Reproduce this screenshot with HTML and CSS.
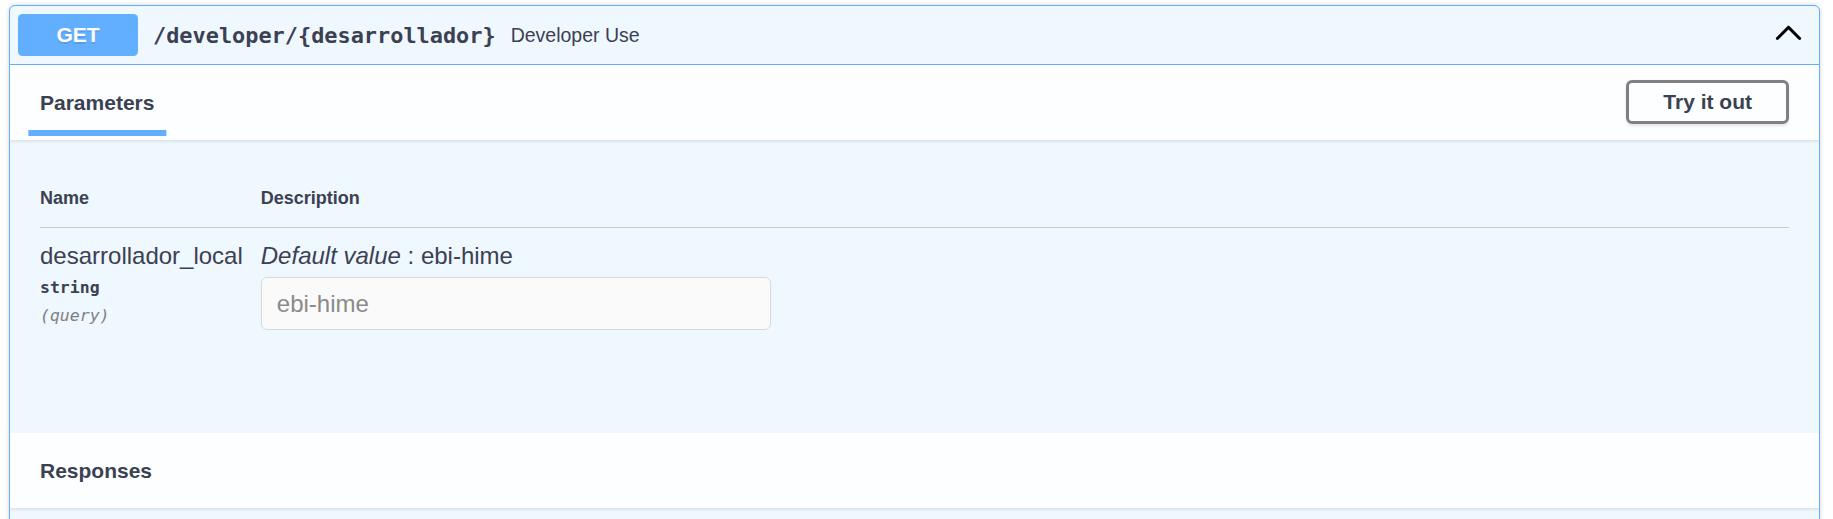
FILE: index.html
```html
<!DOCTYPE html>
<html lang="en">
<head>
<meta charset="utf-8">
<title>GET /developer/{desarrollador}</title>
<link rel="stylesheet" href="styles.css">
</head>
<body>
<div class="wrapper">
  <div class="opblock opblock-get">
    <div class="summary">
      <span class="method">GET</span>
      <span class="path">/developer/{desarrollador}</span>
      <span class="summary-desc">Developer Use</span>
      <svg class="arrow" viewBox="0 0 20 20" width="33" height="33" aria-hidden="true">
        <path d="M17.418 14.908c-.363.363-.95.363-1.313 0L10 8.802l-6.105 6.106c-.363.363-.95.363-1.313 0s-.363-.95 0-1.313l6.762-6.763c.362-.363.949-.363 1.312 0l6.762 6.763c.363.362.363.95 0 1.313z"/>
      </svg>
    </div>
    <div class="section-header">
      <div class="tab-header">
        <h4 class="tab-title"><span class="tab-label">Parameters</span></h4>
      </div>
      <button class="try-out">Try it out</button>
    </div>
    <div class="table-container">
      <table class="parameters">
        <thead>
          <tr>
            <th class="col-name">Name</th>
            <th class="col-desc">Description</th>
          </tr>
        </thead>
        <tbody>
          <tr>
            <td class="col-name">
              <div class="param-name">desarrollador_local</div>
              <div class="param-type">string</div>
              <div class="param-in">(query)</div>
            </td>
            <td class="col-desc">
              <div class="param-default"><i>Default value</i> : ebi-hime</div>
              <input class="param-input" type="text" placeholder="ebi-hime" disabled>
            </td>
          </tr>
        </tbody>
      </table>
    </div>
    <div class="section-header responses-header">
      <h4 class="tab-title">Responses</h4>
    </div>
    <div class="responses-body"></div>
  </div>
</div>
</body>
</html>
```

FILE: styles.css
```css
* {
  box-sizing: border-box;
}

html, body {
  margin: 0;
  padding: 0;
  background: #ffffff;
}

body {
  font-family: "Liberation Sans", Arial, sans-serif;
  color: #3b4151;
  overflow: hidden;
}

.wrapper {
  padding: 5px 13px 0 9px;
}

.opblock {
  border: 1px solid #61affe;
  border-radius: 6px;
  background: #eff7ff;
  box-shadow: 0 0 4.5px rgba(0, 0, 0, 0.19);
  overflow: hidden;
}

.summary {
  display: flex;
  align-items: center;
  padding: 8px 8px 8px 8px;
  border-bottom: 1px solid #61affe;
}

.method {
  display: block;
  width: 120px;
  height: 42px;
  line-height: 42px;
  background: #61affe;
  color: #ffffff;
  border-radius: 4.5px;
  font-size: 21px;
  font-weight: 700;
  text-align: center;
  text-shadow: 0 1.5px 0 rgba(0, 0, 0, 0.1);
}

.path {
  padding: 0 15px;
  font-family: "DejaVu Sans Mono", monospace;
  font-size: 21.9px;
  font-weight: 700;
  color: #3b4151;
}

.summary-desc {
  flex: 1 1 auto;
  font-size: 19.5px;
  color: #3b4151;
}

.arrow {
  flex: none;
  margin: 0 6px 7px 0;
  fill: #000000;
}

.section-header {
  display: flex;
  align-items: center;
  min-height: 75px;
  padding: 12px 30px;
  background: rgba(255, 255, 255, 0.8);
  box-shadow: 0 1.5px 3px rgba(0, 0, 0, 0.1);
  position: relative;
}

.tab-header {
  flex: 1;
  display: flex;
}

.tab-title {
  margin: 0;
  font-size: 21px;
  font-weight: 700;
  color: #3b4151;
}

.tab-label {
  position: relative;
}

.tab-label::after {
  content: "";
  position: absolute;
  left: 50%;
  bottom: -22px;
  width: 120%;
  height: 6px;
  transform: translateX(-50%);
  background: #61affe;
}

.try-out {
  background: transparent;
  border: 3px solid #808080;
  border-radius: 6px;
  box-shadow: 0 1.5px 3px rgba(0, 0, 0, 0.1);
  color: #3b4151;
  font-family: "Liberation Sans", Arial, sans-serif;
  font-size: 21px;
  font-weight: 700;
  line-height: 24px;
  padding: 7px 34px;
  height: 44px;
  margin-bottom: 2px;
}

.table-container {
  padding: 30px 30px 95px;
}

.parameters {
  width: 100%;
  border-collapse: collapse;
}

.parameters th {
  text-align: left;
  font-size: 18px;
  font-weight: 700;
  color: #3b4151;
  padding: 18px 0;
  line-height: 20.7px;
  border-bottom: 1px solid #c5cbd3;
}

.parameters td {
  padding: 14px 0 0;
  vertical-align: top;
}

.parameters .col-desc {
  width: 100%;
}

.param-name {
  font-size: 24px;
  line-height: 27.6px;
  margin-right: 18px;
  white-space: nowrap;
  color: #3b4151;
}

.param-type {
  font-family: "DejaVu Sans Mono", monospace;
  font-size: 16.5px;
  font-weight: 700;
  line-height: 21px;
  padding: 8px 0 7px;
  color: #3b4151;
}

.param-in {
  font-family: "DejaVu Sans Mono", monospace;
  font-size: 16.5px;
  font-style: italic;
  line-height: 21px;
  color: #808080;
}

.param-default {
  font-size: 24px;
  line-height: 27.6px;
  color: #3b4151;
}

.param-input {
  display: block;
  width: 100%;
  max-width: 510px;
  height: 53px;
  margin: 8px 0;
  padding: 0 15px;
  border: 1px solid #d9d9d9;
  border-radius: 6px;
  background: #fafafa;
  font-family: "Liberation Sans", Arial, sans-serif;
  font-size: 24px;
  color: #3b4151;
}

.param-input::placeholder {
  color: #8a8a8a;
}

.responses-header {
  padding: 12px 30px;
}

.responses-body {
  height: 30px;
}
```
